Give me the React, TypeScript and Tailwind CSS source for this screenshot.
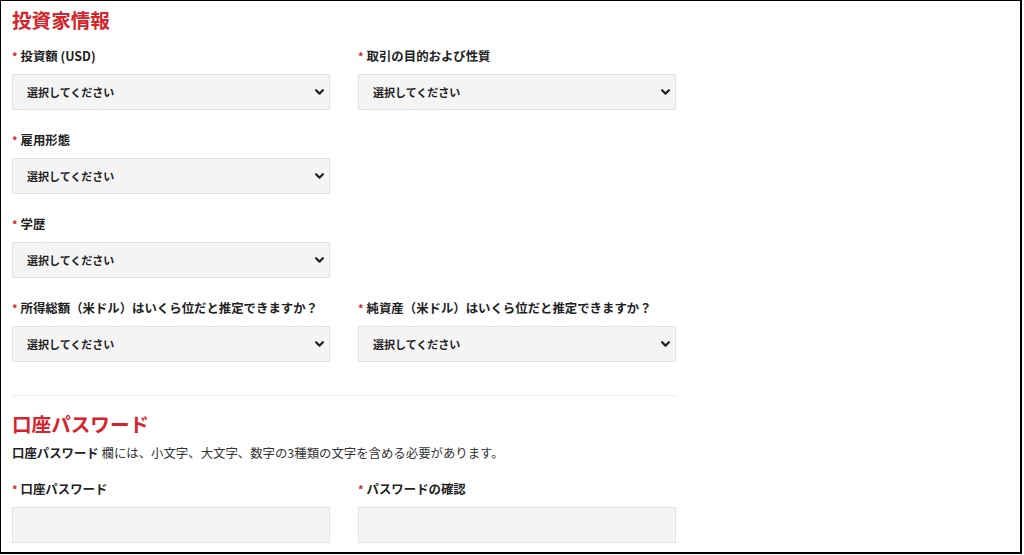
import React from "react";

const font = { fontFamily: '"Noto Sans CJK JP", "Noto Sans", sans-serif' };

function Chevron() {
  return (
    <svg width="9" height="6" viewBox="0 0 9 6" className="shrink-0">
      <path d="M1.1 1.2 L4.5 4.6 L7.9 1.2" fill="none" stroke="#222" strokeWidth="2.2" strokeLinecap="round" strokeLinejoin="round" />
    </svg>
  );
}

function Label({ text }: { text: string }) {
  return (
    <div className="flex items-center h-[18px] mb-[9px] text-[12.4px] font-bold text-[#222] whitespace-nowrap">
      <span className="text-[#d7232b] mr-[3px] text-[11px]">*</span>
      <span>{text}</span>
    </div>
  );
}

function SelectField({ label }: { label: string }) {
  return (
    <div className="w-[318px]">
      <Label text={label} />
      <div className="h-[36px] bg-[#f4f4f4] border border-[#e2e2e2] flex items-center justify-between pl-[14px] pr-[5px]">
        <span className="text-[11px] font-bold text-[#222]">選択してください</span>
        <Chevron />
      </div>
    </div>
  );
}

function InputField({ label }: { label: string }) {
  return (
    <div className="w-[318px]">
      <Label text={label} />
      <div className="h-[36px] bg-[#f4f4f4] border border-[#e2e2e2]" />
    </div>
  );
}

export default function App() {
  return (
    <div className="w-[1024px] h-[555px] bg-white overflow-hidden" style={font}>
      <div className="w-[1022px] h-[554px] border-l border-t border-r-2 border-b-2 border-black pl-[11px] pt-[5px]">
        <h2 className="text-[19.6px] leading-[28px] font-bold text-[#d7232b]">投資家情報</h2>
        <div className="mt-[13px] flex flex-col gap-[21px]">
          <div className="flex gap-[28px]">
            <SelectField label="投資額 (USD)" />
            <SelectField label="取引の目的および性質" />
          </div>
          <div className="flex gap-[28px]">
            <SelectField label="雇用形態" />
          </div>
          <div className="flex gap-[28px]">
            <SelectField label="学歴" />
          </div>
          <div className="flex gap-[28px]">
            <SelectField label="所得総額（米ドル）はいくら位だと推定できますか？" />
            <SelectField label="純資産（米ドル）はいくら位だと推定できますか？" />
          </div>
        </div>
        <div className="w-[664px] h-px bg-[#efefef] mt-[33px]" />
        <h2 className="mt-[14px] text-[19.6px] leading-[28px] font-bold text-[#d7232b]">口座パスワード</h2>
        <p className="mt-[6px] text-[12.4px] leading-[18px] text-[#333]">
          <span className="font-bold text-[#222]">口座パスワード</span> 欄には、小文字、大文字、数字の3種類の文字を含める必要があります。
        </p>
        <div className="mt-[18px] flex gap-[28px]">
          <InputField label="口座パスワード" />
          <InputField label="パスワードの確認" />
        </div>
      </div>
    </div>
  );
}
